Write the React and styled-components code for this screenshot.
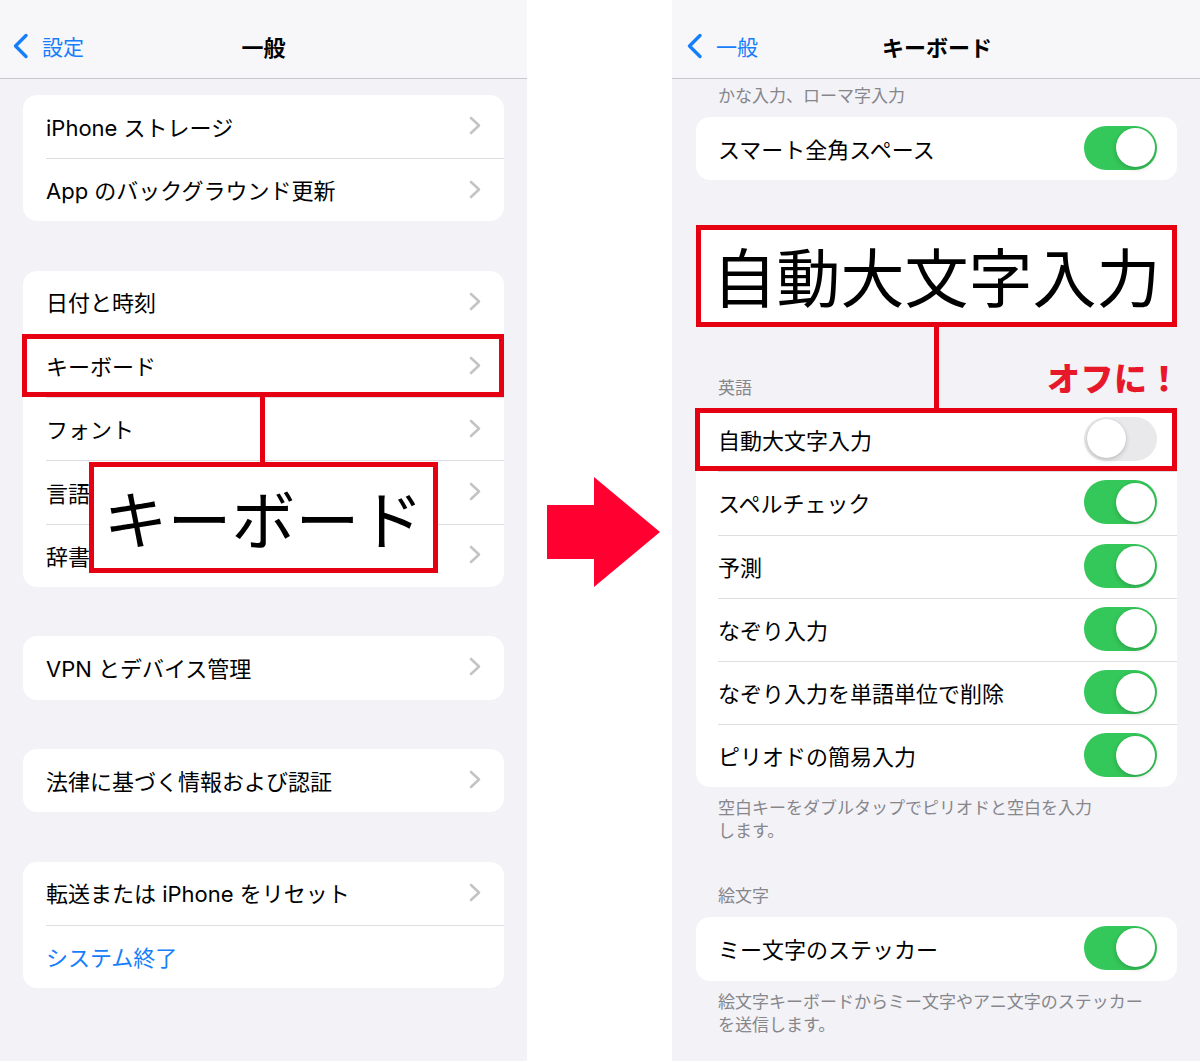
import styled, { createGlobalStyle } from "styled-components";

const GlobalStyle = createGlobalStyle`
  html, body {
    margin: 0;
    padding: 0;
    background: #fff;
  }
  body {
    font-family: Inter, "Noto Sans CJK JP", sans-serif;
    color: #000;
  }
`;

const RED = "#e50012";
const BLUE = "#157efb";

const Page = styled.div`
  display: flex;
  width: 1200px;
  height: 1063px;
  background: #fff;
`;

const Screen = styled.div`
  width: ${(p) => p.$w}px;
  height: 1061px;
  flex-shrink: 0;
  background: #f2f2f7;
  display: flex;
  flex-direction: column;
  overflow: hidden;
`;

const NavBar = styled.div`
  height: 79px;
  box-sizing: border-box;
  padding: 13px 12px 0 ${(p) => p.$pl}px;
  flex-shrink: 0;
  border-bottom: 1px solid #c8c8cc;
  background: #f7f7f9;
  display: grid;
  grid-template-columns: 1fr auto 1fr;
  align-items: center;
`;

const Back = styled.div`
  display: flex;
  align-items: center;
  gap: 13px;
  color: ${BLUE};
  font-size: 21px;
`;

const Title = styled.div`
  font-size: 22px;
  font-weight: 700;
`;

const LeftContent = styled.div`
  display: flex;
  flex-direction: column;
  gap: 49.5px;
  padding: 16px 23px 0;
`;

const RightContent = styled.div`
  display: flex;
  flex-direction: column;
  padding: 7px 23px 0 24px;
`;

const Card = styled.div`
  background: #fff;
  border-radius: 14px;
  position: relative;
`;

const RowBody = styled.div`
  flex: 1;
  display: flex;
  align-items: center;
  justify-content: space-between;
  padding-right: ${(p) => p.$pr}px;
  padding-bottom: 2px;
`;

const Row = styled.div`
  position: relative;
  height: 63.2px;
  display: flex;
  padding-left: ${(p) => p.$pl}px;

  & + & ${RowBody} {
    border-top: 1px solid #dedee2;
  }
`;

const Label = styled.span`
  font-size: 22px;
  color: ${(p) => (p.$blue ? BLUE : "#000")};
  white-space: nowrap;
`;

const Toggle = styled.span`
  position: relative;
  width: 73px;
  height: 44px;
  border-radius: 22px;
  background: ${(p) => (p.$on ? "#34c759" : "#e9e9eb")};

  &::after {
    content: "";
    position: absolute;
    top: 2.5px;
    left: ${(p) => (p.$on ? "31.5px" : "2.5px")};
    width: 39px;
    height: 39px;
    border-radius: 50%;
    background: #fff;
    box-shadow: 0 2px 5px rgba(0, 0, 0, 0.18), 0 0 1px rgba(0, 0, 0, 0.15);
  }
`;

const Highlight = styled.div`
  position: absolute;
  inset: 0 0 0 -1px;
  border: 5px solid ${RED};
  pointer-events: none;
`;

const Callout = styled.div`
  position: absolute;
  top: 100%;
  left: 66px;
  width: 349px;
  display: flex;
  flex-direction: column;
  align-items: center;
  z-index: 2;
`;

const Stem = styled.div`
  width: 5px;
  height: ${(p) => p.$h}px;
  background: ${RED};
  margin-left: -3px;
`;

const BigBox = styled.div`
  box-sizing: border-box;
  width: 100%;
  height: ${(p) => p.$h}px;
  margin-top: ${(p) => p.$mt || 0}px;
  border: 5px solid ${RED};
  background: #fff;
  display: flex;
  align-items: center;
  justify-content: center;
  font-family: "Noto Sans CJK JP", sans-serif;
  font-size: 64px;
  line-height: 1;
  padding-bottom: 4px;
  white-space: nowrap;
`;

const SectionHeader = styled.div`
  padding: ${(p) => p.$pt}px 22px ${(p) => p.$pb}px;
  font-size: 17px;
  line-height: 20px;
  color: #86868b;
`;

const AnnotatedHeader = styled.div`
  position: relative;
  box-sizing: border-box;
  height: 81px;
  display: flex;
  justify-content: space-between;
  align-items: flex-end;
  padding-left: 22px;
`;

const HeaderStem = styled.div`
  position: absolute;
  top: 0;
  bottom: 0;
  left: 50%;
  width: 5px;
  margin-left: -3px;
  background: ${RED};
`;

const HeaderText = styled.span`
  font-size: 17px;
  line-height: 20px;
  color: #86868b;
  padding-bottom: 10px;
`;

const OffLabel = styled.span`
  font-family: "Noto Sans CJK JP", sans-serif;
  font-size: 33px;
  line-height: 33px;
  font-weight: 900;
  letter-spacing: 0.5px;
  color: #e8182b;
  margin-bottom: 14px;
  margin-right: -4px;
`;

const Footer = styled.div`
  padding: 10px 22px 0;
  font-size: 17px;
  line-height: 23px;
  color: #86868b;
`;

const ArrowGap = styled.div`
  flex: 1;
  display: flex;
  align-items: center;
  padding-left: 20px;
`;

const ChevronLeft = () => (
  <svg width="17" height="26" viewBox="0 0 17 26">
    <path d="M14 2.5 L3.5 13 L14 23.5" fill="none" stroke={BLUE} strokeWidth="3.4" strokeLinecap="round" strokeLinejoin="round" />
  </svg>
);

const ChevronRight = () => (
  <svg width="12" height="19" viewBox="0 0 12 19">
    <path d="M2 2 L10 9.5 L2 17" fill="none" stroke="#c4c4c7" strokeWidth="2.6" strokeLinecap="round" strokeLinejoin="round" />
  </svg>
);

const NavRow = ({ label, blue, children }) => (
  <Row $pl={23}>
    <RowBody $pr={23}>
      <Label $blue={blue}>{label}</Label>
      {!blue && <ChevronRight />}
    </RowBody>
    {children}
  </Row>
);

const ToggleRow = ({ label, on = true, children }) => (
  <Row $pl={22}>
    <RowBody $pr={20}>
      <Label>{label}</Label>
      <Toggle $on={on} />
    </RowBody>
    {children}
  </Row>
);

const Nav = ({ back, title, pl }) => (
  <NavBar $pl={pl}>
    <Back>
      <ChevronLeft />
      {back}
    </Back>
    <Title>{title}</Title>
    <div />
  </NavBar>
);

const App = () => {
  return (
    <>
      <GlobalStyle />
      <Page>
        <Screen $w={527}>
          <Nav back="設定" title="一般" pl={12} />
          <LeftContent>
            <Card>
              <NavRow label="iPhone ストレージ" />
              <NavRow label="App のバックグラウンド更新" />
            </Card>
            <Card>
              <NavRow label="日付と時刻" />
              <NavRow label="キーボード">
                <Highlight />
                <Callout>
                  <Stem $h={65} />
                  <BigBox $h={111}>キーボード</BigBox>
                </Callout>
              </NavRow>
              <NavRow label="フォント" />
              <NavRow label="言語" />
              <NavRow label="辞書" />
            </Card>
            <Card>
              <NavRow label="VPN とデバイス管理" />
            </Card>
            <Card>
              <NavRow label="法律に基づく情報および認証" />
            </Card>
            <Card>
              <NavRow label="転送または iPhone をリセット" />
              <NavRow label="システム終了" blue />
            </Card>
          </LeftContent>
        </Screen>

        <ArrowGap>
          <svg width="113" height="110" viewBox="0 0 113 110">
            <polygon points="0,28 47,28 47,0 113,55 47,110 47,82 0,82" fill="#ff0031" />
          </svg>
        </ArrowGap>

        <Screen $w={528}>
          <Nav back="一般" title="キーボード" pl={14} />
          <RightContent>
            <SectionHeader $pt={0} $pb={11}>かな入力、ローマ字入力</SectionHeader>
            <Card>
              <ToggleRow label="スマート全角スペース" />
            </Card>
            <BigBox $h={102} $mt={45}>自動大文字入力</BigBox>
            <AnnotatedHeader>
              <HeaderStem />
              <HeaderText>英語</HeaderText>
              <OffLabel>オフに！</OffLabel>
            </AnnotatedHeader>
            <Card>
              <ToggleRow label="自動大文字入力" on={false}>
                <Highlight />
              </ToggleRow>
              <ToggleRow label="スペルチェック" />
              <ToggleRow label="予測" />
              <ToggleRow label="なぞり入力" />
              <ToggleRow label="なぞり入力を単語単位で削除" />
              <ToggleRow label="ピリオドの簡易入力" />
            </Card>
            <Footer>
              空白キーをダブルタップでピリオドと空白を入力
              <br />
              します。
            </Footer>
            <SectionHeader $pt={43} $pb={11}>絵文字</SectionHeader>
            <Card>
              <ToggleRow label="ミー文字のステッカー" />
            </Card>
            <Footer>
              絵文字キーボードからミー文字やアニ文字のステッカー
              <br />
              を送信します。
            </Footer>
          </RightContent>
        </Screen>
      </Page>
    </>
  );
};

export default App;
